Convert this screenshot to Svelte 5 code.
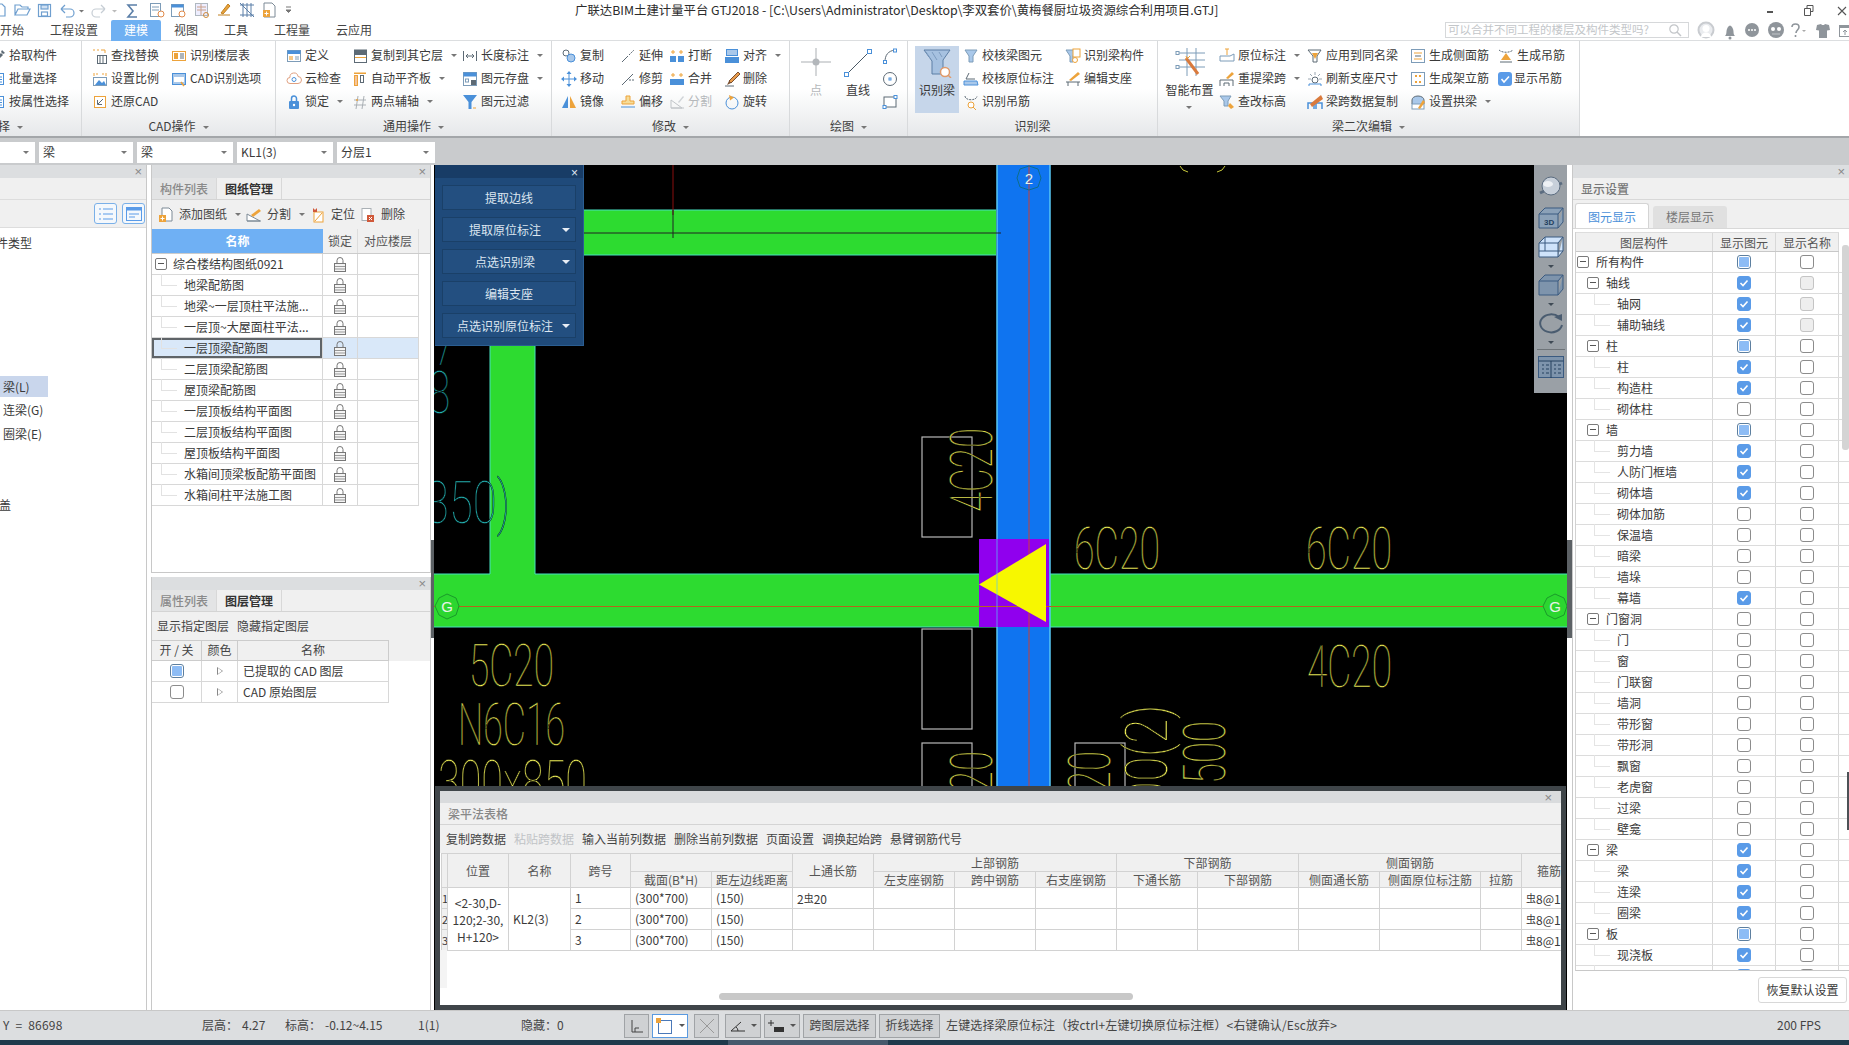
<script>
const B='#4a90d9',O='#eda33b',L='#a9c8ea',K='#5d6a75',W='#7d9cb8';
const I={
pick:`<path d="M2 14 11 5l2 2-9 9z" fill="${K}"/><path d="M12 2l3 3-2 1-2-2z" fill="${K}"/>`,
list:`<rect x="2.5" y="2.5" width="11" height="11" fill="#fff" stroke="${B}"/><path d="M4 6h8M4 8.5h8M4 11h8" stroke="${B}"/>`,
find:`<rect x="5.5" y="7.5" width="9" height="8" fill="#fff" stroke="${K}"/><path d="M8 8v7M11 8v7" stroke="${K}"/><path d="M1 2h2M5 2h2M9 2h4v3" stroke="${O}" fill="none"/>`,
scale:`<path d="M2 2v3M14 2v3M4 3h2M10 3h2" stroke="${O}"/><rect x="1.5" y="6.5" width="13" height="8" fill="#fff" stroke="${W}"/><path d="M3 14l4-5 3 3 2-2 2 4z" fill="${B}"/>`,
restore:`<rect x="2.5" y="2.5" width="11" height="11" fill="#fff" stroke="${O}"/><path d="M11 5 6 10M5.5 6v4.5H10" stroke="${K}" fill="none"/>`,
floor:`<rect x="1.5" y="3.5" width="13" height="9" fill="#fff" stroke="${O}"/><rect x="3" y="5" width="4" height="6" fill="${O}"/><path d="M9 6h4M9 8h4M9 10h4" stroke="${K}"/>`,
cadopt:`<rect x="1.5" y="2.5" width="13" height="11" fill="${L}" stroke="${B}"/><rect x="3" y="6" width="10" height="5" fill="#fff"/><path d="M10 11l3 4" stroke="${O}" stroke-width="1.5"/>`,
def:`<rect x="1.5" y="2.5" width="13" height="11" fill="#fff" stroke="${W}"/><rect x="1.5" y="2.5" width="13" height="3.5" fill="${B}"/><rect x="3" y="8" width="4" height="4" fill="${O}" opacity=".6"/><path d="M9 9h4M9 11h4" stroke="${W}"/>`,
cloud:`<path d="M4 12.5a3 3 0 0 1 0-6 4 4 0 0 1 8-1 3.3 3.3 0 0 1 0 7z" fill="#fff" stroke="#e0a080"/><circle cx="8" cy="8.5" r="2" fill="none" stroke="${B}"/>`,
lock:`<rect x="3" y="7" width="10" height="8" rx="1" fill="${B}"/><path d="M5.5 7V4.5a2.5 2.5 0 0 1 5 0V7" fill="none" stroke="${B}" stroke-width="1.5"/><circle cx="8" cy="11" r="1.2" fill="#fff"/>`,
copyfl:`<rect x="2" y="1.5" width="13" height="4.5" fill="${K}"/><rect x="2.5" y="6.5" width="12" height="8" fill="#fff" stroke="${K}"/><path d="M3 9.5h11" stroke="${O}"/>`,
autoal:`<rect x="2" y="1.5" width="12" height="1.5" fill="${O}"/><rect x="2.5" y="4.5" width="3" height="10" fill="#f6c59a" stroke="${O}"/><rect x="8.5" y="4.5" width="3" height="7" fill="#fff" stroke="${K}"/>`,
twopt:`<path d="M2 6h12M2 11h12M6 2 4 15M12 2l-2 13" stroke="#aab0b5" fill="none"/><circle cx="5" cy="6" r="1" fill="${O}"/>`,
length:`<path d="M1.5 3v10M14.5 3v10M4 8h8M4 8l2-2M4 8l2 2M12 8l-2-2M12 8l-2 2" stroke="${K}" fill="none"/>`,
save:`<rect x="1.5" y="1.5" width="13" height="13" fill="#fff" stroke="${W}"/><rect x="1.5" y="1.5" width="13" height="4" fill="${B}"/><rect x="3.5" y="8" width="3" height="3" fill="none" stroke="${W}"/><rect x="9" y="9" width="5" height="5" fill="${K}"/>`,
filter:`<path d="M1 1h14L9.5 8v7h-3V8z" fill="${B}"/><path d="M11 14h3" stroke="${O}"/>`,
copy:`<circle cx="5" cy="5" r="3" fill="#fff" stroke="${K}"/><circle cx="10" cy="10" r="4" fill="${L}" stroke="${B}"/>`,
move:`<path d="M8 3v10M3 8h10" stroke="${B}"/><path d="M8 0l2.500 3h-5zM8 16l2.500-3h-5zM0 8l3-2.500v5zM16 8l-3-2.500v5z" fill="${B}"/>`,
mirror:`<path d="M7 2v12H1z" fill="${B}"/><path d="M9 2v12h6z" fill="${O}"/>`,
extend:`<path d="M2 14 8 8" stroke="${K}"/><path d="M9 7l5-5" stroke="${K}" stroke-dasharray="2 1"/>`,
trim:`<path d="M2 14 13 3" stroke="${K}"/><path d="M9 9h6" stroke="${K}" stroke-dasharray="2 1"/>`,
offset:`<path d="M6 2h4v5h4v3H2V7h4z" fill="#f6dd9a" stroke="${O}"/><path d="M1 13h14" stroke="${B}"/>`,
break:`<rect x="1" y="8" width="6" height="6" fill="${B}"/><rect x="9" y="8" width="6" height="6" fill="${B}"/><path d="M4 2v4M2 4h4M12 2v4M10 4h4" stroke="${O}"/>`,
merge:`<rect x="1" y="8" width="14" height="6" fill="${B}"/><path d="M4 2v4M2 4h4M12 2v4M10 4h4" stroke="${O}"/>`,
split:`<path d="M2 14V6l11 8zM2 14h13" fill="none" stroke="#c0c4c8"/><path d="M9 8l5-6 1 1-5 6z" fill="#d0d4d8"/>`,
alignt:`<rect x="2.5" y="1.5" width="11" height="6" fill="${L}" stroke="${B}"/><rect x="1" y="9" width="14" height="6" fill="${B}"/>`,
del:`<path d="M14 1 5 10l2 2 9-9z" fill="#e89b4c" stroke="#7a5030"/><path d="M5 10l-2 4 4-2z" fill="#7a5030"/><path d="M1 15h9" stroke="${K}"/>`,
rotate:`<circle cx="8" cy="9" r="6" fill="none" stroke="${B}"/><path d="M5 1l5 2.500-4 3z" fill="${O}"/>`,
funnel:`<path d="M2 2h12l-4 6v6H6V8z" fill="${L}" stroke="${W}"/>`,
chk2:`<path d="M6 2 3 8h9" fill="none" stroke="${K}"/><path d="M1 10h13l1 4H1z" fill="${L}" stroke="${B}"/>`,
hang:`<path d="M2 2c0 5 12 5 12 0" stroke="${K}" stroke-dasharray="2 1" fill="none"/><circle cx="8" cy="11" r="3" fill="#fff" stroke="${O}"/><path d="M10 13l3 3" stroke="${O}"/>`,
bcomp:`<path d="M1 2h10l-3 6v6H5V8z" fill="${L}" stroke="${W}"/><rect x="8" y="1" width="7" height="8" fill="#fff" stroke="${O}"/><circle cx="10" cy="12" r="2.500" fill="#fff" stroke="${O}"/>`,
edit:`<path d="M1 11h14M3 11v4M13 11v4" stroke="${K}"/><path d="M13 1 4 9l2 1 9-7z" fill="${O}"/>`,
orig:`<path d="M8 1v6M6 1h4" stroke="${O}"/><path d="M1 8h10l4-2v7H1z" fill="#fff" stroke="${W}"/>`,
relift:`<path d="M13 1 7 7l2 1 6-5z" fill="${O}"/><path d="M1 15V9h13v6M5 15v-3h5v3" fill="none" stroke="${K}"/>`,
elev:`<path d="M1 2h11l-3 5v5H5V7z" fill="${L}" stroke="${W}"/><path d="M11 9l4 4-3 2-3-3z" fill="${O}"/>`,
apply:`<path d="M1 2h13l-4 6v6H6V8z" fill="#fff" stroke="${K}"/><path d="M5 5h6l-3 6z" fill="${O}"/>`,
refresh:`<path d="M8 1v3M3 3l2 2M13 3l-2 2M1 8h3M12 8h3" stroke="#9aa6b2"/><circle cx="8" cy="9" r="3" fill="#fff" stroke="${K}"/><path d="M2 15v-2h12v2" stroke="${B}" fill="none"/>`,
datacp:`<path d="M1 15V9h6v6M9 15V9h6v6" fill="none" stroke="${B}" stroke-width="1.500"/><path d="M14 1 3 10l2 3 11-8z" fill="#d97a3d"/>`,
side:`<rect x="1.500" y="1.500" width="13" height="13" fill="#fff" stroke="${W}"/><path d="M4 5h8M4 11h8" stroke="${O}"/><path d="M5 8h6" stroke="${K}"/>`,
erect:`<rect x="1.500" y="1.500" width="13" height="13" fill="#fff" stroke="${W}"/><path d="M5 4h2v2H5zM9 4h2v2H9zM5 10h2v2H5zM9 10h2v2H9z" fill="${O}"/>`,
arch:`<path d="M2 10V6a6 4 0 0 1 12 0v4" fill="${L}" stroke="${K}"/><rect x="2" y="10" width="12" height="5" fill="#fff" stroke="${W}"/><path d="M13 6l-5 8 2 1 5-7z" fill="${O}"/>`,
hangs:`<path d="M1 2c3 3 11 3 14 0" stroke="${K}" stroke-dasharray="2 1" fill="none"/><path d="M8 5l5 7H3z" fill="${O}"/><path d="M2 14h12" stroke="${K}"/>`,
check:`<rect x="0" y="1" width="14" height="14" rx="3" fill="#5a9be8"/><path d="M3.500 8l2.500 3 5-5.500" stroke="#fff" stroke-width="1.600" fill="none"/>`,
arc:`<path d="M3 14C3 7 6 3 13 2" stroke="${K}" fill="none"/><rect x="1.500" y="12.500" width="3" height="3" fill="#fff" stroke="${B}"/><rect x="11.500" y="1" width="3" height="3" fill="#fff" stroke="${B}"/>`,
circ:`<circle cx="8" cy="8" r="6.500" fill="#fff" stroke="${K}"/><rect x="7" y="7" width="2" height="2" fill="none" stroke="${B}"/>`,
rect2:`<rect x="2" y="3" width="12" height="10" fill="#fff" stroke="${K}"/><rect x="1" y="11.500" width="3" height="3" fill="#fff" stroke="${B}"/><rect x="12" y="1.500" width="3" height="3" fill="#fff" stroke="${B}"/>`,
};
const it=(t,i,c,g,n)=>({t,i,c,g,n});
const groups=[
{w:82,label:'选择',cls:'g0',caret:1,lx:-14,cols:[{w:92,rows:[it('拾取构件','pick'),it('批量选择','list'),it('按属性选择','list')]}]},
{w:194,pad:10,label:'CAD操作',caret:1,cols:[{w:79,rows:[it('查找替换','find'),it('设置比例','scale'),it('还原CAD','restore')]},{w:100,rows:[it('识别楼层表','floor'),it('CAD识别选项','cadopt')]}]},
{w:276,pad:10,label:'通用操作',caret:1,cols:[{w:66,rows:[it('定义','def'),it('云检查','cloud'),it('锁定','lock',1)]},{w:110,rows:[it('复制到其它层','copyfl',1),it('自动平齐板','autoal',1),it('两点辅轴','twopt',1)]},{w:85,rows:[it('长度标注','length',1),it('图元存盘','save',1),it('图元过滤','filter')]}]},
{w:238,pad:9,label:'修改',caret:1,cols:[{w:59,rows:[it('复制','copy'),it('移动','move'),it('镜像','mirror')]},{w:49,rows:[it('延伸','extend'),it('修剪','trim'),it('偏移','offset')]},{w:55,rows:[it('打断','break'),it('合并','merge'),it('分割','split',0,1)]},{w:60,rows:[it('对齐','alignt',1),it('删除','del'),it('旋转','rotate')]}]},
{w:118,label:'绘图',caret:1,cols:[{big:'pt',w:52,t:'点',g:1},{big:'ln',w:32,t:'直线'},{w:32,small:1,rows:[it('','arc'),it('','circ'),it('','rect2')]}]},
{w:250,pad:7,label:'识别梁',cols:[{big:'rec',w:44,t:'识别梁',on:1,mr:4},{w:102,rows:[it('校核梁图元','funnel'),it('校核原位标注','chk2'),it('识别吊筋','hang')]},{w:90,rows:[it('识别梁构件','bcomp'),it('编辑支座','edit')]}]},
{w:422,pad:7,label:'梁二次编辑',caret:1,cols:[{big:'smart',w:49,t:'智能布置',mr:5,drop:1},{w:88,rows:[it('原位标注','orig',1),it('重提梁跨','relift',1),it('查改标高','elev')]},{w:103,rows:[it('应用到同名梁','apply'),it('刷新支座尺寸','refresh'),it('梁跨数据复制','datacp')]},{w:88,rows:[it('生成侧面筋','side'),it('生成架立筋','erect'),it('设置拱梁','arch',1)]},{w:70,rows:[it('生成吊筋','hangs'),it('显示吊筋','check',0,0,1)]}]},
];
const tabs=['开始','工程设置','建模','视图','工具','工程量','云应用'];
const combos=[{w:35,t:''},{w:94,t:'梁'},{w:96,t:'梁'},{w:96,t:'KL1(3)'},{w:98,t:'分层1'}];
const drawings=['地梁配筋图','地梁~一层顶柱平法施...','一层顶~大屋面柱平法...','一层顶梁配筋图','二层顶梁配筋图','屋顶梁配筋图','一层顶板结构平面图','二层顶板结构平面图','屋顶板结构平面图','水箱间顶梁板配筋平面图','水箱间柱平法施工图'];
const layerRows=[['所有构件',0,'p','e'],['轴线',1,'c','d'],['轴网',2,'c','d'],['辅助轴线',2,'c','d'],['柱',1,'p','e'],['柱',2,'c','e'],['构造柱',2,'c','e'],['砌体柱',2,'e','e'],['墙',1,'p','e'],['剪力墙',2,'c','e'],['人防门框墙',2,'c','e'],['砌体墙',2,'c','e'],['砌体加筋',2,'e','e'],['保温墙',2,'e','e'],['暗梁',2,'e','e'],['墙垛',2,'e','e'],['幕墙',2,'c','e'],['门窗洞',1,'e','e'],['门',2,'e','e'],['窗',2,'e','e'],['门联窗',2,'e','e'],['墙洞',2,'e','e'],['带形窗',2,'e','e'],['带形洞',2,'e','e'],['飘窗',2,'e','e'],['老虎窗',2,'e','e'],['过梁',2,'e','e'],['壁龛',2,'e','e'],['梁',1,'c','e'],['梁',2,'c','e'],['连梁',2,'c','e'],['圈梁',2,'c','e'],['板',1,'p','e'],['现浇板',2,'c','e'],['',2,'c','e']];
const floatBtns=[['提取边线',0],['提取原位标注',1],['点选识别梁',1],['编辑支座',0],['点选识别原位标注',1]];
const tbar=['复制跨数据','粘贴跨数据','输入当前列数据','删除当前列数据','页面设置','调换起始跨','悬臂钢筋代号'];
const colW=[6,61,62,60,81,81,81,81,81,81,81,101,81,101,41,60];
const spans=[['1','(300*700)','(150)','2虫20','虫8@1'],['2','(300*700)','(150)','','虫8@1'],['3','(300*700)','(150)','','虫8@1']];
const cad=[['5C20',469,686,85],['N6C16',458,745,107],['300x850',438,802,149],['6C20',1074,569,86],['6C20',1306,569,86],['4C20',1307,687,85]];
const cadRot=[['4C20',992,512,84],['6C20',992,835,84],['4C20',1110,835,84],['500(2)',1167,831,126],['1500',1225,805,84]];
</script>

{#snippet ic(name,size=16)}
<svg class="ic" width={size} height={size} viewBox="0 0 16 16">{@html I[name]}</svg>
{/snippet}
{#snippet box(s)}
<span class="cb {s}">{#if s==='c'}<svg width="10" height="10" viewBox="0 0 10 10"><path d="M1.500 5l2.500 2.500 4.500-5" stroke="#fff" stroke-width="1.600" fill="none"/></svg>{/if}</span>
{/snippet}
{#snippet minus()}<span class="mn"></span>{/snippet}
{#snippet padlock()}
<svg width="12" height="15" viewBox="0 0 12 15"><rect x=".5" y="6.500" width="11" height="8" fill="#f4f4f4" stroke="#777"/><path d="M1 9.500h10M1 12h10" stroke="#999"/><path d="M3 6.500V3.500a3 3 0 0 1 6 0V6.500" fill="none" stroke="#777"/></svg>
{/snippet}

<div class="app">
  <div class="title">
    <div class="qa">
      <svg width="300" height="20" viewBox="0 0 300 20">
        <g fill="none" stroke="#6f9fcf" stroke-width="1.200">
          <path d="M-4 4h6l3 3v9h-9z"/>
          <path d="M15 15V5h5l2 2h6v2M15 15l3-6h12l-3 6z"/>
          <rect x="38.500" y="4.500" width="12" height="12"/><rect x="41" y="5" width="7" height="4" fill="#cfe0f3"/><rect x="41.500" y="12" width="6" height="4"/>
          <path d="M61 9h9a4 4 0 0 1 0 8h-4M61 9l4-4M61 9l4 4"/>
          <path d="M105 9h-9a4 4 0 0 0 0 8h4M105 9l-4-4M105 9l-4 4" stroke="#c6cdd4"/>
        </g>
        <path d="M79 10l2.500 2.500 2.500-2.500z" fill="#777"/><path d="M112 10l2.500 2.500 2.500-2.500z" fill="#bbb"/>
        <path d="M137 5h-9l5 6-5 6h9" fill="none" stroke="#5b7fa8" stroke-width="1.600"/>
        <rect x="150.500" y="3.500" width="10" height="13" fill="#fff" stroke="#7d9cb8"/><path d="M152 7h7M152 10h7" stroke="#7d9cb8"/><circle cx="161" cy="14" r="3" fill="#fff" stroke="#e08a4a"/>
        <rect x="171.500" y="4.500" width="12" height="12" fill="#fff" stroke="#7d9cb8"/><rect x="171.500" y="4.500" width="12" height="3" fill="#4a90d9"/><circle cx="182" cy="14" r="3" fill="#fff" stroke="#e08a4a"/>
        <rect x="195.500" y="3.500" width="12" height="12" fill="#eef" stroke="#b0b8c0"/><path d="M197 7h9M197 10h9M201 4v11" stroke="#c9a08a"/><circle cx="206" cy="15" r="2.500" fill="none" stroke="#d08a3a"/>
        <path d="M218 15h12M228 4l-7 9 2 1 7-8z" fill="#e8a33d" stroke="#c08020"/>
        <path d="M240 5h14M240 15h14M243 3v14M247 3v14M251 3v14M240 3l14 14" fill="none" stroke="#5b7fa8"/>
        <path d="M264 3h8l3 3v11h-11z" fill="#fff" stroke="#7d8a96"/><rect x="263" y="10" width="7" height="7" fill="#eda33b"/><path d="M266.500 11.500v4M264.500 13.500h4" stroke="#fff"/>
        <path d="M286 7h5M286 10l2.500 2.500 2.500-2.500z" stroke="#777" fill="#777"/>
      </svg>
    </div>
    <div class="ttext">广联达BIM土建计量平台 GTJ2018 - [C:\Users\Administrator\Desktop\李双套价\黄梅餐厨垃圾资源综合利用项目.GTJ]</div>
    <div class="win">
      <svg width="90" height="20" viewBox="0 0 90 20">
        <path d="M8 12h6" stroke="#555" stroke-width="2"/>
        <path d="M45.500 8.500h6v7h-6zM48 8V5.500h6v6h-2" fill="none" stroke="#555"/>
        <path d="M79 7l8 8M87 7l-8 8" stroke="#555" stroke-width="1.100"/>
      </svg>
    </div>
  </div>

  <div class="tabsrow">
    <div class="tabs">{#each tabs as t,i}<div class="tab" class:on={i===2}>{t}</div>{/each}</div>
    <div class="search"><span>可以合并不同工程的楼层及构件类型吗?</span>
      <svg width="14" height="14" viewBox="0 0 14 14"><circle cx="6" cy="6" r="4.200" fill="none" stroke="#c3c6c9" stroke-width="1.200"/><path d="M9 9l4 4" stroke="#c3c6c9" stroke-width="1.500"/></svg>
    </div>
    <svg class="sysic" width="160" height="21" viewBox="0 0 160 21">
      <circle cx="17" cy="10" r="7.500" fill="#eaecef" stroke="#c9ccd0" stroke-width="2"/><path d="M12 17c0-6 10-6 10 0" fill="#fff"/><circle cx="17" cy="8.500" r="3.500" fill="#fff"/>
      <path d="M41 16H35c2-2 1-4 2-7 1-3 2.500-3.500 3-3.500S42 6 43 9c1 3 0 5 2 7z" transform="translate(1 0)" fill="#8f959b"/><circle cx="41" cy="18" r="1.500" fill="#8f959b"/>
      <circle cx="63" cy="10" r="7" fill="#8f959b"/><path d="M59 10h2M62 10h2M65 10h2" stroke="#fff" stroke-width="1.500"/>
      <circle cx="87" cy="10" r="8" fill="#8f959b"/><circle cx="84" cy="9" r="2" fill="#fff"/><circle cx="90" cy="9" r="2" fill="#fff"/><path d="M83 14h8" stroke="#c0c4c8"/>
      <path d="M103 7c0-4 7-4 7 0 0 3-3 3-3 6M106.500 15v2" fill="none" stroke="#8f959b" stroke-width="1.600"/><path d="M113 10l2 2 2-2z" fill="#aaa"/>
      <path d="M128 5l4-1 1 1h2l1-1 4 1 1 5-3 .5V18h-8V10.500l-3-.5z" fill="#8f959b"/>
      <rect x="150.500" y="5.500" width="12" height="11" fill="#fff" stroke="#8f959b"/><rect x="150" y="5" width="12" height="3" fill="#8f959b"/><path d="M156 15v-5M154 12l2-2 2 2" stroke="#8f959b" fill="none"/>
    </svg>
  </div>

  <div class="ribbon">
    {#each groups as g}
      <div class="grp" style="width:{g.w}px;padding-left:{g.pad||0}px">
        <div class="cols">
          {#each g.cols as c}
            {#if c.big}
              <div class="big" class:on={c.on} class:gr={c.g} style="width:{c.w}px;margin-right:{c.mr||0}px">
                <svg width="32" height="30" viewBox="0 0 32 30">
                  {#if c.big==='pt'}
                    <path d="M16 0v28M1 14h30" stroke="#c7cacd" stroke-width="1.500"/><circle cx="16" cy="14" r="3.500" fill="#b3b7bb"/>
                  {:else if c.big==='ln'}
                    <path d="M6 25 27 4" stroke="#4c5a66"/><rect x="2.500" y="24.500" width="4" height="4" fill="#fff" stroke="#4a90d9"/><rect x="25.500" y="1.500" width="4" height="4" fill="#fff" stroke="#4a90d9"/>
                  {:else if c.big==='rec'}
                    <path d="M3 2h26l-7 10v14H11V13z" fill="#a6c1e0" stroke="#5d7fa5"/><path d="M5 4l4 6M11 4l5 8M18 4l3 5" stroke="#7d9cc0"/><circle cx="24" cy="24" r="4.500" fill="#fff" stroke="#e09a6a" stroke-width="1.500"/><path d="M27 27l3 3" stroke="#e09a6a" stroke-width="1.500"/>
                  {:else}
                    <path d="M5 5h26M5 12h26M5 19h26M13 0v28M22 0v28" stroke="#7d9cb8"/><rect x="2" y="3.500" width="3" height="3" fill="#fff" stroke="#7d9cb8"/><rect x="2" y="17.500" width="3" height="3" fill="#fff" stroke="#7d9cb8"/><path d="M12 10 24 26" stroke="#d97a3d" stroke-width="3"/><path d="M12 8l1 3M16 8l-2 2" stroke="#eda33b"/>
                  {/if}
                </svg>
                <span>{c.t}</span>
                {#if c.drop}<i class="car dropc"></i>{/if}
              </div>
            {:else}
              <div class="col" class:smallcol={c.small} style="width:{c.w}px">
                {#each c.rows as r}
                  <div class="item" class:gr={r.g} class:narrow={r.n}>{@render ic(r.i)}{#if r.t}<span>{r.t}</span>{/if}{#if r.c}<i class="car"></i>{/if}</div>
                {/each}
              </div>
            {/if}
          {/each}
        </div>
        <div class="glabel" style="margin-left:{(g.lx||0)-(g.pad||0)}px">{g.label}{#if g.caret}<i class="car lc"></i>{/if}</div>
      </div>
    {/each}
  </div>

  <div class="combos">
    {#each combos as c}<div class="combo" style="width:{c.w}px"><span>{c.t}</span><i class="car"></i></div>{/each}
  </div>

  <div class="main">
    <div class="left">
      <div class="pbar"><b class="x">×</b></div>
      <div class="lstrip"></div>
      <div class="ltool">
        <span class="lbtn"><svg width="16" height="14" viewBox="0 0 16 14"><path d="M1 2h2M1 7h2M1 12h2M5 2h10M5 7h10M5 12h10" stroke="#5a9be8" stroke-width="1.200"/></svg></span>
        <span class="lbtn"><svg width="16" height="14" viewBox="0 0 16 14"><rect x=".5" y=".5" width="15" height="13" fill="none" stroke="#5a9be8"/><rect x=".5" y=".5" width="15" height="3" fill="#5a9be8"/><path d="M3 7h10M3 10h6" stroke="#5a9be8"/></svg></span>
      </div>
      <div class="llist">
        <div class="li1">件类型</div>
        <div class="lsel">梁(L)</div>
        <div class="li2">连梁(G)</div>
        <div class="li2">圈梁(E)</div>
        <div class="li3">盖</div>
      </div>
    </div>
    <div class="gut"></div>

    <div class="mid">
      <section class="pn top">
        <div class="pbar"><b class="x">×</b></div>
        <div class="ptabs"><span class="pt">构件列表</span><span class="pt on">图纸管理</span></div>
        <div class="ptool tall">
          <span class="ti"><svg width="16" height="16" viewBox="0 0 16 16"><path d="M4 1h7l3 3v10H4z" fill="#fff" stroke="#7d8a96"/><rect x="1" y="8" width="7" height="7" fill="#eda33b"/><path d="M4.500 9.500v4M2.500 11.500h4" stroke="#fff"/></svg>添加图纸<i class="car"></i></span>
          <span class="ti"><svg width="16" height="16" viewBox="0 0 16 16"><path d="M1 14V7l13 7zM1 14h14" fill="#fff" stroke="#7d8a96"/><path d="M5 8l8-6 2 2-8 6z" fill="#eda33b"/></svg>分割<i class="car"></i></span>
          <span class="ti"><svg width="16" height="16" viewBox="0 0 16 16"><rect x="4" y="5" width="9" height="10" fill="#fff" stroke="#eda33b"/><path d="M5 14 12 6" stroke="#eda33b"/><path d="M3 1l2 2 2-2v4H3z" fill="#d0593a"/></svg>定位</span>
          <span class="ti"><svg width="16" height="16" viewBox="0 0 16 16"><rect x="2" y="1.500" width="9" height="12" fill="#fff" stroke="#aab0b5"/><rect x="7" y="8" width="7" height="7" fill="#d0593a"/><path d="M9 10l3 3M12 10l-3 3" stroke="#fff"/></svg>删除</span>
        </div>
        <div class="dh">
          <span class="dn">名称</span><span class="dc">锁定</span><span class="dc w61">对应楼层</span>
        </div>
        <div class="dr first"><span class="dname">{@render minus()}综合楼结构图纸0921</span><span class="dlock">{@render padlock()}</span><span class="dfl"></span></div>
        {#each drawings as d,i}
          <div class="dr" class:sel={i===3}><span class="dname child">{d}</span><span class="dlock">{@render padlock()}</span><span class="dfl"></span></div>
        {/each}
      </section>
      <section class="pn bot">
        <div class="pbar"><b class="x">×</b></div>
        <div class="ptabs"><span class="pt">属性列表</span><span class="pt on">图层管理</span></div>
        <div class="ptool plain"><span>显示指定图层</span><span>隐藏指定图层</span></div>
        <div class="lh"><span class="l1">开 / 关</span><span class="l2">颜色</span><span class="l3">名称</span></div>
        <div class="lr"><span class="l1">{@render box('p')}</span><span class="l2"><i class="tri"></i></span><span class="l3 tl">已提取的 CAD 图层</span></div>
        <div class="lr"><span class="l1">{@render box('e')}</span><span class="l2"><i class="tri"></i></span><span class="l3 tl">CAD 原始图层</span></div>
      </section>
    </div>
    <div class="gut2"><span class="handle"></span></div>

    <div class="canvas">
      <svg class="cad" width="1133" height="845" viewBox="434 165 1133 845">
        <g class="beam">
          <rect x="584" y="210" width="412" height="45"/>
          <rect x="490" y="340" width="45" height="240"/>
          <rect x="430" y="574" width="1137" height="53"/>
        </g>
        <path d="M584 210h412M584 255h412M490 345v229M535 345v229M434 627h1133M535 574h444M1050 574h517M434 574h56" stroke="#49e0c0" fill="none"/>
        <rect x="997" y="165" width="53" height="845" fill="#0f74f0"/>
        <path d="M997 165v845M1050 165v845" stroke="#58c8f5" stroke-width="1.500"/>
        <rect x="979" y="539" width="70" height="88" fill="#9000ee"/>
        <path d="M584 233h417" stroke="#222"/>
        <path d="M673 165v50" stroke="#8a0e0e"/><path d="M673 210v28" stroke="#222"/>
        <path d="M434 606.500h1133" stroke="#b5651d" stroke-width="1.200"/>
        <path d="M1029 165v845" stroke="#c8403a"/>
        <path d="M979 584.500 1046 544v78z" fill="#f7f700"/>
        <path d="M997 539v88" stroke="#58c8f5" opacity=".7"/>
        <polygon points="1029,166 1038,169 1041,178 1038,187 1029,190 1020,187 1017,178 1020,169" fill="none" stroke="#0d6e8c"/>
        <text x="1029" y="184" class="axl">2</text>
        <polygon points="447,594 456,598 459,606 456,615 447,619 439,615 435,606 439,598" fill="#2cd630" stroke="#1a9a2a"/>
        <text x="447" y="612" class="axl">G</text>
        <polygon points="1555,594 1564,598 1567,606 1564,615 1555,619 1547,615 1543,606 1547,598" fill="#2cd630" stroke="#1a9a2a"/>
        <text x="1555" y="612" class="axl">G</text>
        <g fill="none" stroke="#b8b8b8" stroke-width="1.200">
          <rect x="922" y="437" width="50" height="100"/>
          <rect x="922" y="629" width="50" height="100"/>
          <rect x="922" y="743" width="50" height="100"/>
          <rect x="1075" y="743" width="50" height="100"/>
        </g>
        {#each cad as [t,x,y,w]}<text class="ct" x={x} y={y} textLength={w} lengthAdjust="spacingAndGlyphs">{t}</text>{/each}
        {#each cadRot as [t,x,y,w]}<text class="ct" transform="translate({x},{y}) rotate(-90)" textLength={w} lengthAdjust="spacingAndGlyphs">{t}</text>{/each}
        <text class="ct teal" x="425" y="523" textLength="85" lengthAdjust="spacingAndGlyphs">350)</text>
        <text class="ct teal" x="429" y="413" textLength="21" lengthAdjust="spacingAndGlyphs">8</text>
        <text class="ct teal" x="434" y="365" textLength="21" lengthAdjust="spacingAndGlyphs">7</text>
        <path d="M1180 166l3 4 5 2M1225 166l-3 4-5 2" fill="none" stroke="#c9c93c"/>
      </svg>

      <div class="float">
        <div class="fh"><b>×</b></div>
        {#each floatBtns as [t,c]}
          <div class="fb" class:hasc={c}><span>{t}</span>{#if c}<i></i>{/if}</div>
        {/each}
      </div>

      <div class="vt">
        <svg width="28" height="26" viewBox="0 0 28 26"><path d="M3 19 25 9" stroke="#5b6c80" stroke-width="3"/><circle cx="14" cy="12" r="9" fill="#c8d0da" stroke="#5b6c80"/><ellipse cx="11" cy="10" rx="5" ry="3" fill="#eef1f5"/></svg>
        <svg width="26" height="24" viewBox="0 0 26 24"><path d="M1 8h19v14H1zM1 8l6-6h18l-5 6M20 22l5-6V2" fill="#8ba1b8" stroke="#3a5a80"/><text x="6" y="19" class="t3d">3D</text></svg>
        <svg width="26" height="24" viewBox="0 0 26 24"><path d="M1 8h19v14H1zM1 8l6-6h18l-5 6M20 22l5-6V2" fill="#cfe3fa" stroke="#3a5a80"/><path d="M7 2v14H1M7 16h18" stroke="#3a5a80" fill="none"/></svg>
        <i class="vc"></i>
        <svg width="26" height="24" viewBox="0 0 26 24"><path d="M1 8h19v14H1zM1 8l6-6h18l-5 6M20 22l5-6V2" fill="#7e94ac" stroke="#3a5a80"/></svg>
        <i class="vc"></i>
        <svg width="26" height="24" viewBox="0 0 26 24"><path d="M24 14a11 9 0 1 1-3-8" fill="none" stroke="#4a5c70" stroke-width="2"/><path d="M16 6l8-3v7z" fill="#4a5c70"/></svg>
        <i class="vc"></i>
        <hr />
        <svg width="26" height="22" viewBox="0 0 26 22"><rect x=".5" y=".5" width="25" height="21" fill="#7e94ac" stroke="#3a5a80"/><path d="M.5 5h25M13 5v17M4 9h2M4 13h2M4 17h2M8 9h3M8 13h3M8 17h3M16 9h2M16 13h2M16 17h2M20 9h3M20 13h3M20 17h3" stroke="#24405f"/></svg>
      </div>

      <div class="pf">
        <div class="pfbar"><b class="x">×</b></div>
        <div class="pfhead">梁平法表格</div>
        <div class="pftool">{#each tbar as t,i}<span class:dim={i===1}>{t}</span>{/each}</div>
        <div class="tbl">
          <table>
            <colgroup>{#each colW as w}<col style="width:{w}px" />{/each}</colgroup>
            <thead>
              <tr class="h1">
                <th rowspan="2"></th><th rowspan="2">位置</th><th rowspan="2">名称</th><th rowspan="2">跨号</th>
                <th colspan="2"></th><th rowspan="2">上通长筋</th><th colspan="3">上部钢筋</th><th colspan="2">下部钢筋</th><th colspan="3">侧面钢筋</th><th rowspan="2" class="thl">箍筋</th>
              </tr>
              <tr class="h2">
                <th>截面(B*H)</th><th>距左边线距离</th><th>左支座钢筋</th><th>跨中钢筋</th><th>右支座钢筋</th><th>下通长筋</th><th>下部钢筋</th><th>侧面通长筋</th><th>侧面原位标注筋</th><th>拉筋</th>
              </tr>
            </thead>
            <tbody>
              {#each spans as s,i}
                <tr>
                  <td class="no">{s[0]}</td>
                  {#if i===0}<td rowspan="3" class="pos">&lt;2-30,D-<br />120;2-30,<br />H+120&gt;</td><td rowspan="3">KL2(3)</td>{/if}
                  <td>{s[0]}</td><td>{s[1]}</td><td>{s[2]}</td><td class="rb">{@html s[3].replace('虫','<small>虫</small>')}</td><td></td><td></td><td></td><td></td><td></td><td></td><td></td><td></td><td class="rb">{@html s[4].replace('虫','<small>虫</small>')}</td>
                </tr>
              {/each}
            </tbody>
          </table>
        </div>
        <div class="numstrip"></div>
        <div class="hs"></div>
      </div>
    </div>
    <div class="gut3"><span class="handle"></span></div>

    <div class="right">
      <div class="pbar"><b class="x">×</b></div>
      <div class="rh">显示设置</div>
      <div class="rtabs"><span class="rt on">图元显示</span><span class="rt">楼层显示</span></div>
      <div class="rtable">
        <div class="rr hd"><span class="r1 c">图层构件</span><span class="r2">显示图元</span><span class="r3">显示名称</span></div>
        {#each layerRows as [t,lv,a,b]}
          <div class="rr">
            <span class="r1 lv{lv}">{#if lv<2}{@render minus()}{/if}<span>{t}</span></span>
            <span class="r2">{@render box(a)}</span>
            <span class="r3">{@render box(b)}</span>
          </div>
        {/each}
        <div class="scroll"></div>
      </div>
      <div class="rfoot"><span class="reset">恢复默认设置</span></div>
      <span class="rhandle"></span>
    </div>
  </div>

  <div class="status">
    <span class="s s0">Y = 86698</span>
    <span class="s s1">层高：<em>4.27</em></span>
    <span class="s s2">标高：<em>-0.12~4.15</em></span>
    <span class="s s3">1(1)</span>
    <span class="s s4">隐藏：0</span>
    <span class="sb w25"><svg width="14" height="14" viewBox="0 0 14 14"><path d="M2 1v12h11M5 9h4M5 9v4" stroke="#444" fill="none"/></svg></span>
    <span class="sb w36 act"><svg width="20" height="18" viewBox="0 0 20 18"><rect x="3.500" y="3.500" width="13" height="13" fill="none" stroke="#4a78b8"/><rect x="1" y="1" width="5" height="5" fill="#eda33b"/></svg><i class="car"></i></span>
    <span class="sb w25 mg6"><svg width="18" height="18" viewBox="0 0 18 18"><path d="M2 2l14 14M16 2 2 16" stroke="#999"/></svg></span>
    <span class="sb w36 mg6"><svg width="18" height="14" viewBox="0 0 18 14"><path d="M2 12h14M2 12 12 3" stroke="#333" fill="none"/><path d="M7 8a5 5 0 0 1 2 4" stroke="#333" fill="none"/></svg><i class="car"></i></span>
    <span class="sb w36 mg3"><svg width="18" height="14" viewBox="0 0 18 14"><path d="M3 1v6M0 4h6" stroke="#333"/><rect x="6" y="8" width="10" height="5" fill="#333"/></svg><i class="car"></i></span>
    <span class="sb txt mg3 w73">跨图层选择</span>
    <span class="sb txt mg3 w61">折线选择</span>
    <span class="s hint">左键选择梁原位标注（按ctrl+左键切换原位标注框）&lt;右键确认/Esc放弃&gt;</span>
    <span class="s fps">200 FPS</span>
  </div>
  <div class="task"><i></i></div>
</div>

<style>
:global(body){margin:0;background:#fff}
.app{width:1849px;height:1045px;overflow:hidden;display:flex;flex-direction:column;font:12px/1.2 "Noto Sans CJK SC","Noto Sans",sans-serif;color:#3a3a3a;background:#fff}
.ic{flex:none;display:block}
.car{display:inline-block;width:0;height:0;border:3px solid transparent;border-top:3.500px solid #777;border-bottom:0;flex:none}
.x{font:400 13px/12px "Liberation Sans",sans-serif;color:#888}

.title{height:20px;display:flex;flex:none;position:relative}
.qa{width:575px;flex:none}
.ttext{font-size:12.400px;line-height:20px;white-space:nowrap;color:#2c2c2c}
.win{position:absolute;right:0;top:0}

.tabsrow{height:21px;flex:none;display:flex;border-bottom:1px solid #dcdee0;box-sizing:border-box}
.tabs{display:flex;margin-left:-13px;width:1458px;flex:none}
.tab{padding:0 13px;line-height:20px;color:#444;height:21px;box-sizing:border-box}
.tab.on{background:#6fb0f2;color:#fff;border-radius:2px 2px 0 0}
.search{width:244px;height:16px;margin-top:2px;border:1px solid #d6d8da;box-sizing:border-box;display:flex;align-items:center;justify-content:space-between;padding:0 6px 0 2px;color:#c3c6c9;font-size:11.500px;flex:none;background:#fff}
.sysic{flex:none;margin-top:0}

.ribbon{height:97px;flex:none;display:flex;background:#fff;border-bottom:2px solid #a3a6a9;box-sizing:border-box}
.grp{flex:none;box-sizing:border-box;background:linear-gradient(#fff 50%,#e6e8ea);border-right:1px solid #d8dadc;display:flex;flex-direction:column;position:relative;overflow:hidden}
.cols{height:70px;padding-top:3px;display:flex;flex:none}
.col{flex:none;display:flex;flex-direction:column}
.item{height:23px;display:flex;align-items:center;gap:3px;white-space:nowrap;flex:none}
.item .car{margin-left:5px}
.item.gr{color:#b5b8bb}
.item.narrow{gap:0}
.smallcol{align-items:center}
.big{flex:none;display:flex;flex-direction:column;align-items:center;height:67px;padding-top:2px;box-sizing:border-box;margin-top:2px;white-space:nowrap;position:relative}
.big span{margin-top:5px;line-height:14px}
.big.on{background:#c6d6ea}
.big.gr span{color:#b5b8bb}
.dropc{position:absolute;left:21px;top:60px}
.glabel{height:24px;line-height:24px;text-align:center;color:#3f3f3f;white-space:nowrap;flex:none}
.lc{margin-left:7px;vertical-align:2px}
.grp:first-child .cols{margin-left:-10px}
.grp:first-child .glabel{text-align:left}

.combos{height:27px;flex:none;background:#c9cbcd;display:flex;gap:4px;padding-top:4px;box-sizing:border-box;margin-top:0}
.combo{height:21px;background:#fff;flex:none;display:flex;align-items:center;justify-content:space-between;padding:0 6px 0 4px;box-sizing:border-box}
.combo span{color:#3a3a3a}

.main{height:845px;flex:none;display:flex}
.left{width:147px;flex:none;box-sizing:border-box;border-right:1px solid #c8c8c8;display:flex;flex-direction:column;background:#fff}
.pbar{height:13px;background:#dcdee0;flex:none;text-align:right;padding-right:4px;box-sizing:border-box;line-height:11px}
.lstrip{height:21px;background:#f0f0f0;border-bottom:1px solid #ddd;flex:none}
.ltool{height:28px;background:#f0f0f0;flex:none;display:flex;gap:5px;justify-content:flex-end;align-items:center;border-bottom:1px solid #ddd;padding-right:1px;box-sizing:border-box}
.lbtn{width:23px;height:21px;box-sizing:border-box;border:1px solid #7ab0e8;border-radius:3px;display:flex;align-items:center;justify-content:center;background:#f4f8fc}
.llist{flex:1;position:relative;padding-top:6px}
.li1{margin-left:-4px;line-height:18px;height:142px;overflow:hidden;width:60px}
.lsel{width:48px;height:21px;background:#c9d6ec;line-height:21px;padding-left:3px;box-sizing:border-box}
.li2{padding-left:3px;height:24px;line-height:24px}
.lsel + .li2{margin-top:1px}
.li3{line-height:20px;margin-left:-1px;margin-top:49px}
.gut{width:4px;flex:none;background:#fff}

.mid{width:280px;flex:none;display:flex;flex-direction:column;gap:4px}
.pn{box-sizing:border-box;border:solid #c8c8c8;border-width:0 1px;display:flex;flex-direction:column;background:#fff}
.top{height:408px;border-bottom:1px solid #c8c8c8}
.bot{flex:1}
.ptabs{height:22px;flex:none;background:#f0f0f0;display:flex;border-bottom:1px solid #d4d4d4;box-sizing:border-box}
.pt{width:65px;text-align:center;line-height:21px;background:#e3e4e5;color:#8a8a8a;font-weight:500;border-right:1px solid #d8d8d8;box-sizing:border-box}
.pt.on{background:#f0f0f0;color:#333;font-weight:700}
.ptool{height:28px;flex:none;background:#f0f0f0;display:flex;align-items:center;gap:5px;padding-left:6px;box-sizing:border-box;white-space:nowrap;color:#444}
.ptool.tall{height:29px}
.ptool.plain{gap:8px;padding-left:5px}
.ti{display:flex;align-items:center;gap:5px}
.ti .car{margin-left:3px}
.dh{height:25px;flex:none;display:flex;background:#f0f0f0;border-bottom:1px solid #ccc;box-sizing:border-box;line-height:24px;text-align:center;color:#555}
.dn{width:171px;background:#6fb0f4;color:#fff;font-weight:700}
.dc{width:35px;border-right:1px solid #ddd;box-sizing:border-box}
.dc.w61{width:61px}
.dr{height:21px;flex:none;display:flex;width:267px;border-bottom:1px solid #d8d8d8;box-sizing:border-box;line-height:20px}
.dname{width:171px;border-right:1px solid #d8d8d8;box-sizing:border-box;padding-left:3px;display:flex;align-items:center;gap:6px;white-space:nowrap;position:relative}
.dname.child{padding-left:32px}
.dname.child::before{content:"";position:absolute;left:9px;width:16px;top:10px;border-top:1px solid #e2e2e2}
.dname.child::after{content:"";position:absolute;left:9px;top:-1px;height:12px;border-left:1px solid #e2e2e2}
.dlock{width:35px;border-right:1px solid #d8d8d8;box-sizing:border-box;display:flex;align-items:center;justify-content:center}
.dfl{width:61px;border-right:1px solid #d8d8d8;box-sizing:border-box}
.dr.sel{background:#d9e8f9}
.dr.sel .dname{box-shadow:inset 0 0 0 2px #5f6468}
.mn{width:12px;height:12px;border:1px solid #7a7a7a;border-radius:2px;box-sizing:border-box;flex:none;position:relative;background:#fff;display:inline-block}
.mn::after{content:"";position:absolute;left:2px;right:2px;top:4px;border-top:1px solid #555}
.cb{width:14px;height:14px;box-sizing:border-box;display:inline-flex;align-items:center;justify-content:center;border-radius:3px;border:1px solid #8c8c8c;background:#fff;flex:none}
.cb.c{background:#5a9be8;border-color:#5a9be8}
.cb.d{background:#eee;border-color:#c4c4c4}
.cb.p{border-color:#5d7f9f;background:#fff;padding:1px}
.cb.p::after{content:"";display:block;width:10px;height:10px;background:#8dbcf5;border-radius:1px}

.lh{height:21px;flex:none;display:flex;background:#f0f0f0;line-height:18px;text-align:center;box-sizing:border-box;color:#444}
.lh>span{border-bottom:1px solid #ccc;border-top:1px solid #ccc;border-right:1px solid #ccc;box-sizing:border-box;height:21px}
.lr{height:21px;flex:none;display:flex;box-sizing:border-box}
.lr>span{display:flex;align-items:center;justify-content:center;border-bottom:1px solid #d8d8d8;border-right:1px solid #d8d8d8;box-sizing:border-box;height:21px}
.l1{width:50px}.l2{width:36px}.l3{width:151px}
.lr>span.tl{justify-content:flex-start;padding-left:5px}
.tri{width:0;height:0;border:solid transparent;border-width:4px 0 4px 6px;border-left-color:#888;position:relative}
.tri::after{content:"";position:absolute;left:-5px;top:-3px;border:solid transparent;border-width:3px 0 3px 4px;border-left-color:#fff}

.gut2{width:3px;flex:none;position:relative;background:#fff}
.gut3{width:5px;flex:none;position:relative;background:#fff}
.handle{position:absolute;left:0;right:0;top:375px;height:98px;background:#5c6165}

.canvas{width:1133px;flex:none;background:#000;position:relative;overflow:hidden}
.cad{position:absolute;left:0;top:0;display:block}
.beam rect{fill:#2ddb30}
.axl{font:400 15px "Liberation Sans",sans-serif;text-anchor:middle;fill:#e8f4e8}
.ct{font-family:"Roboto","Inter",sans-serif;font-weight:100;font-size:60px;fill:#f6f65a;stroke:#000;stroke-width:.5px}
.ct.teal{fill:#24b5b5}
.t3d{font:700 8px "Liberation Sans",sans-serif;fill:#24405f}

.float{position:absolute;left:1px;top:0;width:149px;height:181px;background:#1f4a7a;display:flex;flex-direction:column;gap:7px;box-sizing:border-box;padding:0 7px;border:1px solid #2b5e92;border-top:0;border-left:0}
.fh{height:13px;background:#183c66;margin:0 -7px;text-align:right;padding-right:5px;color:#dfe8f2;line-height:13px}
.fh b{font:400 12px/13px "Liberation Sans",sans-serif}
.fb{height:25px;background:#234f80;border:1px solid #1a4068;box-sizing:border-box;color:#dce6f0;text-align:center;line-height:23px;position:relative}
.fb.hasc span{margin-right:8px}
.fb i{position:absolute;right:5px;top:10px;border:4px solid transparent;border-top:4px solid #e8eef5;border-bottom:0}

.vt{position:absolute;right:0;top:0;width:33px;height:228px;background:#9aa0a6;display:flex;flex-direction:column;align-items:center;gap:5.500px;padding-top:9px;box-sizing:border-box}
.vt svg{flex:none}
.vt .vc{width:0;height:0;border:3px solid transparent;border-top:3.500px solid #3f4a55;border-bottom:0;flex:none}
.vt hr{width:28px;border:0;border-top:1px solid #6e7479;margin:0;flex:none}

.pf{position:absolute;left:1px;right:1px;bottom:0;height:224px;box-sizing:border-box;border:5px solid #3f4549;background:#fff;display:flex;flex-direction:column;overflow:hidden}
.pfbar{height:12px;background:#d9dbdd;text-align:right;padding-right:9px;flex:none;line-height:11px}
.pfhead{height:22px;background:#f0f0f0;border-bottom:1px solid #d4d4d4;box-sizing:border-box;color:#888;line-height:21px;padding-left:8px;font-weight:500;flex:none}
.pftool{height:28px;background:#f0f0f0;display:flex;gap:8px;align-items:center;padding-left:6px;flex:none;color:#444;box-sizing:border-box}
.pftool .dim{color:#c0c3c6}
.tbl{position:relative;overflow:hidden;flex:none;padding-left:1px;background:#fff}
table{table-layout:fixed;border-collapse:collapse;width:1140px}
th,td{border:1px solid #d2d2d2;padding:0;font-weight:400;box-sizing:border-box;white-space:nowrap;overflow:hidden}
th{background:#f0f0f0;color:#555;text-align:center}
.h1 th{height:18px;line-height:16px}
.h2 th{height:16px;line-height:15px}
.thl{text-align:left;padding-left:15px}
tbody tr{height:21px}
td{height:21px;line-height:18px;padding-left:4px;color:#3a3a3a}
td.no{padding:0;background:#f0f0f0;font-size:11px;text-align:center}
td.pos{line-height:17px;padding:0;text-align:center}
td.rb :global(small){font-size:10px;vertical-align:2px}
.numstrip{position:absolute;left:0;top:159px;width:7px;bottom:17px;background:#f4f4f4}
.hs{position:absolute;left:279px;width:414px;height:7px;top:202px;background:#c8c8c8;border-radius:4px}

.right{width:277px;flex:none;box-sizing:border-box;border-left:1px solid #c8c8c8;background:#fff;display:flex;flex-direction:column;position:relative}
.rh{height:22px;background:#f0f0f0;line-height:21px;padding-left:8px;color:#777;flex:none;border-bottom:1px solid #d8d8d8;box-sizing:border-box;font-weight:500}
.rtabs{height:29px;background:#f0f0f0;padding-left:2px;display:flex;gap:4px;align-items:flex-end;border-bottom:1px solid #d8d8d8;box-sizing:border-box;flex:none}
.rt{width:74px;height:22px;line-height:22px;text-align:center;background:#e0e0e0;color:#777;border-radius:3px 3px 0 0;box-sizing:border-box}
.rt.on{background:#fff;color:#4a90d9;height:25px;line-height:26px;border:1px solid #d4d4d4;border-bottom:0}
.rtable{margin-top:3px;height:738px;overflow:hidden;position:relative;flex:none;border-bottom:1px solid #c8c8c8;margin-left:2px;border-left:1px solid #d2d2d2}
.rr{height:21px;display:flex;box-sizing:border-box;border-bottom:1px solid #dcdcdc}
.rr.hd{height:20px;background:#f0f0f0;border-bottom:1px solid #c8c8c8;text-align:center;line-height:19px;color:#555;width:263px;border-top:1px solid #ddd;box-sizing:border-box}
.rr>span{box-sizing:border-box;border-right:1px solid #d8d8d8;display:flex;align-items:center;justify-content:center}
.r1{width:137px}.r2{width:63px}.r3{width:63px}
.rr>.r1:not(.c){justify-content:flex-start;gap:7px;padding-left:1px;position:relative}
.rr>.lv1{padding-left:11px !important}
.rr>.lv2{padding-left:41px !important}
.lv2::before{content:"";position:absolute;left:18px;width:16px;top:10px;border-top:1px solid #e4e4e4}
.lv2::after{content:"";position:absolute;left:18px;top:-1px;height:12px;border-left:1px solid #e4e4e4}
.scroll{position:absolute;right:0;top:13px;width:7px;height:205px;background:#d4d4d4;border-radius:3px}
.rfoot{flex:1;display:flex;justify-content:flex-end;align-items:flex-start;padding-top:6px;padding-right:2px}
.reset{width:89px;height:26px;border:1px solid #d8d8d8;border-radius:3px;text-align:center;line-height:24px;box-sizing:border-box;background:#fff}
.rhandle{position:absolute;right:0;top:607px;width:2px;height:58px;background:#4c5156}

.status{height:30px;flex:none;background:#dcdee0;display:flex;align-items:center;color:#444;white-space:nowrap;border-top:1px solid #c8c8c8;box-sizing:border-box}
.s{flex:none}
.s em{font-style:normal;margin-left:4px}
.s0{padding-left:3px;box-sizing:border-box;word-spacing:3px;letter-spacing:.2px;width:202px}
.s1{width:83px}
.s2{width:133px}
.s3{width:103px}
.s4{width:103px}
.sb{flex:none;height:24px;background:#cfd1d3;border:1px solid #a0a3a6;box-sizing:border-box;display:flex;align-items:center;justify-content:center;gap:4px}
.sb.act{background:#fff;border-color:#5a9ae0;margin-left:3px}
.sb .car{border-top-color:#555}
.w25{width:25px}.w36{width:36px}.w73{width:73px}.w61{width:61px}
.mg6{margin-left:6px}.mg3{margin-left:3px}
.hint{margin-left:6px;width:831px;letter-spacing:.13px}
.task{height:5px;flex:none;background:#1f3a4c;position:relative}
.task i{position:absolute;left:728px;width:160px;top:0;bottom:0;background:#46596c}
</style>
